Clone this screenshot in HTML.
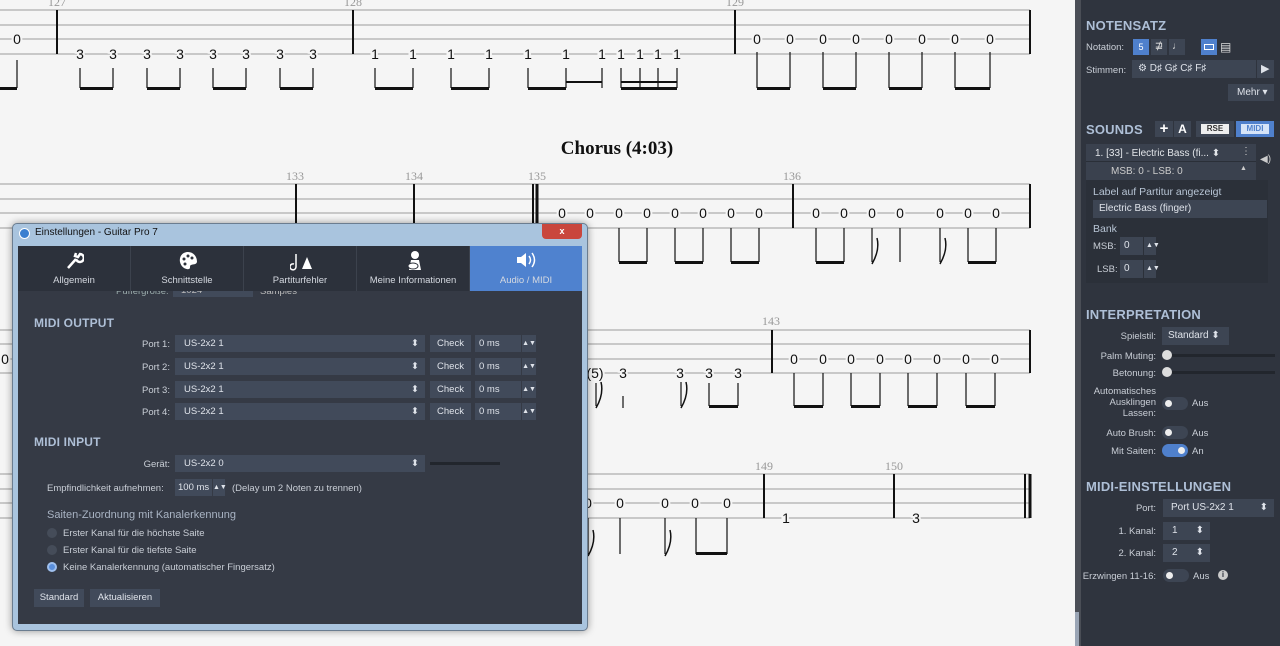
<!DOCTYPE html>
<html><head><meta charset="utf-8"><style>
*{margin:0;padding:0;box-sizing:border-box}
body{width:1280px;height:646px;overflow:hidden;background:#f5f5f5;font-family:"Liberation Sans",sans-serif;position:relative}
.abs{position:absolute}
#panel{position:absolute;left:1075px;top:0;width:205px;height:646px;background:#2f343e;color:#c9ced6;font-size:10px}
#panel .strip{position:absolute;left:0;top:0;width:6px;height:646px;background:#4a4e56}
.h{position:absolute;font-weight:bold;font-size:13px;color:#aebfd6;letter-spacing:.2px}
.lbl{position:absolute;text-align:right;font-size:9.5px;color:#c9ced6}
.box{position:absolute;background:#3d4553;color:#dfe3ea;font-size:10px;padding-left:6px;line-height:18px}
.tog{position:absolute;width:26px;height:13px;border-radius:7px;background:#3d4553}
.tog:before{content:"";position:absolute;left:3px;top:3px;width:7px;height:7px;border-radius:50%;background:#eee}
.tog.on{background:#4f80cc}.tog.on:before{left:16px}
.slider{position:absolute;height:3px;background:#22262d}
.knob{position:absolute;width:10px;height:10px;border-radius:50%;background:#ddd}
#dlg{position:absolute;left:12px;top:223px;width:576px;height:408px;background:#a9c4de;border:1px solid #6b7d90;border-radius:5px;box-shadow:0 0 8px rgba(0,0,0,.4)}
#dlg .inner{position:absolute;left:5px;top:22px;width:564px;height:378px;background:#353a45;color:#c9ced6;font-size:9.5px}
.tab{position:absolute;top:0;height:45px;width:113px;background:#2c313b;color:#d5d9e0;font-size:9.5px;text-align:center;border-right:1px solid #3c424d}
.tab span{position:absolute;bottom:5px;left:0;right:0}
.sel{position:absolute;background:#414a5a;color:#dfe3ea;height:17px;line-height:17px;padding-left:9px;font-size:9.5px}
.btn{position:absolute;background:#414a5a;color:#dfe3ea;height:17px;line-height:17px;text-align:center;font-size:9.5px}
.radio{position:absolute;width:10px;height:10px;border-radius:50%;background:#454c59}
</style></head><body>
<svg class="abs" style="left:0;top:0" width="1075" height="646" font-family="Liberation Sans,sans-serif" font-size="14">
<g stroke="#9a9a9a" stroke-width="1">
<path d="M0 10H1030M0 25H1030M0 39H1030M0 54H1030"/>
<path d="M0 184H1030M0 199H1030M0 213H1030M0 228H1030"/>
<path d="M0 330H1030M0 344H1030M0 359H1030M0 373H1030"/>
<path d="M0 474H1030M0 489H1030M0 503H1030M0 518H1030"/>
</g>
<g stroke="#111" stroke-width="2">
<path d="M57 10V54M353 10V54M735 10V54M1030 10V54"/>
<path d="M296 184V228M414 184V228M533 184V228M793 184V228M1030 184V228"/>
<path d="M772 330V373M1030 330V373"/>
<path d="M764 474V518M894 474V518M1025 474V518"/>
</g>
<path d="M537 184V228M1030 474V518" stroke="#111" stroke-width="3"/>
<g fill="#999" font-family="Liberation Serif,serif" font-size="12" text-anchor="middle">
<text x="57" y="6">127</text><text x="353" y="6">128</text><text x="735" y="6">129</text>
<text x="295" y="180">133</text><text x="414" y="180">134</text><text x="537" y="180">135</text><text x="792" y="180">136</text>
<text x="771" y="325">143</text><text x="764" y="470">149</text><text x="894" y="470">150</text>
</g>
<text x="617" y="154" font-family="Liberation Serif,serif" font-weight="bold" font-size="19" text-anchor="middle" fill="#111">Chorus (4:03)</text>
<g fill="#111" text-anchor="middle">
<g style="paint-order:stroke" stroke="#f5f5f5" stroke-width="4">
<text x="17" y="44">0</text>
<text x="80" y="59">3</text><text x="113" y="59">3</text><text x="147" y="59">3</text><text x="180" y="59">3</text><text x="213" y="59">3</text><text x="246" y="59">3</text><text x="280" y="59">3</text><text x="313" y="59">3</text>
<text x="375" y="59">1</text><text x="413" y="59">1</text><text x="451" y="59">1</text><text x="489" y="59">1</text><text x="528" y="59">1</text><text x="566" y="59">1</text><text x="602" y="59">1</text><text x="621" y="59">1</text><text x="640" y="59">1</text><text x="658" y="59">1</text><text x="677" y="59">1</text>
<text x="757" y="44">0</text><text x="790" y="44">0</text><text x="823" y="44">0</text><text x="856" y="44">0</text><text x="889" y="44">0</text><text x="922" y="44">0</text><text x="955" y="44">0</text><text x="990" y="44">0</text>
<text x="562" y="218">0</text><text x="590" y="218">0</text><text x="619" y="218">0</text><text x="647" y="218">0</text><text x="675" y="218">0</text><text x="703" y="218">0</text><text x="731" y="218">0</text><text x="759" y="218">0</text>
<text x="816" y="218">0</text><text x="844" y="218">0</text><text x="872" y="218">0</text><text x="900" y="218">0</text><text x="940" y="218">0</text><text x="968" y="218">0</text><text x="996" y="218">0</text>
<text x="794" y="364">0</text><text x="823" y="364">0</text><text x="851" y="364">0</text><text x="880" y="364">0</text><text x="908" y="364">0</text><text x="937" y="364">0</text><text x="966" y="364">0</text><text x="995" y="364">0</text>
<text x="5" y="364">0</text>
<text x="595" y="378">(5)</text><text x="623" y="378">3</text><text x="680" y="378">3</text><text x="709" y="378">3</text><text x="738" y="378">3</text>
<text x="588" y="508">0</text><text x="620" y="508">0</text><text x="665" y="508">0</text><text x="695" y="508">0</text><text x="727" y="508">0</text>
<text x="786" y="523">1</text><text x="916" y="523">3</text>
</g>
</g>
<g stroke="#111" stroke-width="1.2" fill="none">
<path d="M17 60V88M80 68V88M113 68V88M147 68V88M180 68V88M213 68V88M246 68V88M280 68V88M313 68V88M375 68V88M413 68V88M451 68V88M489 68V88M528 68V88M566 68V88M602 68V88M621 68V88M640 68V88M658 68V88M677 68V88M757 52V88M790 52V88M823 52V88M856 52V88M889 52V88M922 52V88M955 52V88M990 52V88"/>
<path d="M619 228V262M647 228V262M675 228V262M703 228V262M731 228V262M759 228V262M816 228V262M844 228V262M872 228V262M900 228V262M968 228V262M996 228V262M940 228V262"/>
<path d="M794 373V406M823 373V406M851 373V406M880 373V406M908 373V406M937 373V406M966 373V406M995 373V406M596 383V406M623 396V408M681 382V406M709 383V406M738 383V406"/>
<path d="M620 518V554M665 518V554M696 518V554M727 518V554M588 518V554"/>
</g>
<g fill="#111">
<rect x="0" y="87" width="17" height="3"/><rect x="80" y="87" width="33" height="3"/><rect x="147" y="87" width="33" height="3"/><rect x="213" y="87" width="33" height="3"/><rect x="280" y="87" width="33" height="3"/>
<rect x="375" y="87" width="38" height="3"/><rect x="451" y="87" width="38" height="3"/><rect x="528" y="87" width="38" height="3"/><rect x="566" y="81" width="36" height="2"/><rect x="621" y="87" width="56" height="3"/><rect x="621" y="81" width="56" height="2"/>
<rect x="757" y="87" width="33" height="3"/><rect x="823" y="87" width="33" height="3"/><rect x="889" y="87" width="33" height="3"/><rect x="955" y="87" width="35" height="3"/>
<rect x="619" y="261" width="28" height="3"/><rect x="675" y="261" width="28" height="3"/><rect x="731" y="261" width="28" height="3"/><rect x="816" y="261" width="28" height="3"/><rect x="968" y="261" width="28" height="3"/>
<rect x="794" y="405" width="29" height="3"/><rect x="851" y="405" width="29" height="3"/><rect x="908" y="405" width="29" height="3"/><rect x="966" y="405" width="29" height="3"/><rect x="709" y="405" width="29" height="3"/>
<rect x="696" y="552" width="31" height="3"/>
</g>
<g stroke="#111" stroke-width="1.5" fill="none"><path d="M872 264Q880 250 877 238M940 264Q948 250 945 238M596 408Q604 394 601 382M681 408Q689 394 686 382M665 556Q673 542 670 530M588 556Q596 542 593 530"/></g>
</svg>

<div id="dlg">
<div class="abs" style="left:6px;top:4px;width:11px;height:11px;border-radius:50%;background:#3a7fd0;border:1px solid #fff"></div>
<div class="abs" style="left:22px;top:3px;font-size:10px;color:#111">Einstellungen - Guitar Pro 7</div>
<div class="abs" style="left:529px;top:0;width:40px;height:15px;background:#c9463d;border-radius:0 0 4px 4px;color:#fff;font-size:9px;text-align:center;line-height:15px;font-weight:bold">x</div>
<div class="inner">
<div class="tab" style="left:0"><svg class="abs" style="left:46px;top:5px" width="20" height="20"><path d="M4 17L12 8M12 8a4 4 0 1 0 4-5l-2 3-3-1 1-3" stroke="#fff" stroke-width="2.5" fill="none"/></svg><span>Allgemein</span></div>
<div class="tab" style="left:113px"><svg class="abs" style="left:47px;top:5px" width="20" height="20"><path d="M10 1C4 1 1 6 2 11s6 8 9 7c2-1 0-3 2-4s5 0 6-3C19 5 15 1 10 1z" fill="#fff"/><circle cx="6" cy="8" r="1.5" fill="#2c313b"/><circle cx="10" cy="5" r="1.5" fill="#2c313b"/><circle cx="14" cy="7" r="1.5" fill="#2c313b"/><circle cx="7" cy="13" r="1.5" fill="#2c313b"/></svg><span>Schnittstelle</span></div>
<div class="tab" style="left:226px"><svg class="abs" style="left:46px;top:5px" width="22" height="20"><path d="M12 18L17 6 22 18z" fill="#fff"/><path d="M6 3v13a3 3 0 1 1-2-3" stroke="#fff" stroke-width="1.5" fill="none"/></svg><span>Partiturfehler</span></div>
<div class="tab" style="left:339px"><svg class="abs" style="left:47px;top:4px" width="22" height="22"><circle cx="11" cy="5" r="4" fill="#fff"/><path d="M5 20l2-10h8l2 10z" fill="#fff"/><ellipse cx="9" cy="16" rx="5" ry="3" fill="#fff" stroke="#2c313b"/></svg><span>Meine Informationen</span></div>
<div class="tab" style="left:452px;width:112px;background:#4f82cf;border:none"><svg class="abs" style="left:45px;top:5px" width="22" height="18"><path d="M2 6h4l5-4v14l-5-4H2z" fill="#fff"/><path d="M14 5q3 4 0 8M17 2q5 7 0 14" stroke="#fff" stroke-width="1.5" fill="none"/></svg><span>Audio / MIDI</span></div>
<div class="abs" style="left:0;top:45px;width:564px;height:10px;overflow:hidden">
<div class="abs" style="left:98px;top:-5px;color:#9aa">Puffergröße:</div>
<div class="abs" style="left:155px;top:-6px;width:80px;height:12px;background:#414a5a;color:#bbb;padding-left:8px">1024</div>
<div class="abs" style="left:242px;top:-5px;color:#bbb">Samples</div></div>
<div class="h" style="left:16px;top:70px;font-size:12px">MIDI OUTPUT</div>
<div class="lbl" style="left:90px;width:62px;top:93px">Port 1:</div><div class="sel" style="left:157px;top:89px;width:250px">US-2x2 1<span style="position:absolute;right:6px">⬍</span></div><div class="btn" style="left:412px;top:89px;width:41px">Check</div><div class="sel" style="left:457px;top:89px;width:46px;padding-left:4px">0 ms</div><div class="btn" style="left:504px;top:89px;width:14px;font-size:7px">▲▼</div>
<div class="lbl" style="left:90px;width:62px;top:116px">Port 2:</div><div class="sel" style="left:157px;top:112px;width:250px">US-2x2 1<span style="position:absolute;right:6px">⬍</span></div><div class="btn" style="left:412px;top:112px;width:41px">Check</div><div class="sel" style="left:457px;top:112px;width:46px;padding-left:4px">0 ms</div><div class="btn" style="left:504px;top:112px;width:14px;font-size:7px">▲▼</div>
<div class="lbl" style="left:90px;width:62px;top:139px">Port 3:</div><div class="sel" style="left:157px;top:135px;width:250px">US-2x2 1<span style="position:absolute;right:6px">⬍</span></div><div class="btn" style="left:412px;top:135px;width:41px">Check</div><div class="sel" style="left:457px;top:135px;width:46px;padding-left:4px">0 ms</div><div class="btn" style="left:504px;top:135px;width:14px;font-size:7px">▲▼</div>
<div class="lbl" style="left:90px;width:62px;top:161px">Port 4:</div><div class="sel" style="left:157px;top:157px;width:250px">US-2x2 1<span style="position:absolute;right:6px">⬍</span></div><div class="btn" style="left:412px;top:157px;width:41px">Check</div><div class="sel" style="left:457px;top:157px;width:46px;padding-left:4px">0 ms</div><div class="btn" style="left:504px;top:157px;width:14px;font-size:7px">▲▼</div>
<div class="h" style="left:16px;top:189px;font-size:12px">MIDI INPUT</div>
<div class="lbl" style="left:90px;width:62px;top:213px">Gerät:</div><div class="sel" style="left:157px;top:209px;width:250px">US-2x2 0<span style="position:absolute;right:6px">⬍</span></div>
<div class="abs" style="left:412px;top:216px;width:70px;height:3px;background:#22262d"></div>
<div class="abs" style="left:29px;top:237px">Empfindlichkeit aufnehmen:</div>
<div class="sel" style="left:157px;top:233px;width:37px;padding-left:3px">100 ms</div><div class="btn" style="left:195px;top:233px;width:12px;font-size:7px">▲▼</div>
<div class="abs" style="left:214px;top:237px">(Delay um 2 Noten zu trennen)</div>
<div class="abs" style="left:29px;top:263px;font-size:11px;color:#a9b4c4">Saiten-Zuordnung mit Kanalerkennung</div>
<div class="radio" style="left:29px;top:282px"></div><div class="abs" style="left:45px;top:282px">Erster Kanal für die höchste Saite</div>
<div class="radio" style="left:29px;top:299px"></div><div class="abs" style="left:45px;top:299px">Erster Kanal für die tiefste Saite</div>
<div class="radio" style="left:29px;top:316px;background:#5a8fdc;border:2px solid #9fc0ee"></div><div class="abs" style="left:45px;top:316px">Keine Kanalerkennung (automatischer Fingersatz)</div>
<div class="btn" style="left:16px;top:343px;width:50px;height:18px">Standard</div>
<div class="btn" style="left:72px;top:343px;width:70px;height:18px">Aktualisieren</div>
</div></div>

<div id="panel"><div class="strip"></div>
<div class="h" style="left:11px;top:18px">NOTENSATZ</div>
<div class="lbl" style="left:11px;top:42px;text-align:left">Notation:</div>
<div class="abs" style="left:58px;top:39px;width:16px;height:16px;background:#4f80cc;color:#fff;text-align:center;font-size:9px;line-height:16px">5</div>
<div class="abs" style="left:76px;top:39px;width:16px;height:16px;background:#3d4553;color:#ddd;text-align:center;line-height:16px">⋣</div>
<div class="abs" style="left:94px;top:39px;width:16px;height:16px;background:#3d4553;color:#ddd;text-align:center;line-height:16px">♩</div>
<div class="abs" style="left:126px;top:39px;width:16px;height:16px;background:#4f80cc"><div style="margin:5px 3px;height:6px;border:1px solid #fff"></div></div>
<div class="abs" style="left:145px;top:39px;width:16px;height:16px;color:#ddd;font-size:12px;line-height:16px">▤</div>
<div class="lbl" style="left:11px;top:65px;text-align:left">Stimmen:</div>
<div class="box" style="left:57px;top:60px;width:124px">⚙ D♯ G♯ C♯ F♯</div>
<div class="box" style="left:182px;top:60px;width:17px;padding-left:4px;font-size:11px">▶</div>
<div class="box" style="left:153px;top:84px;width:46px;height:17px;line-height:17px;padding-left:9px">Mehr ▾</div>
<div class="h" style="left:11px;top:122px">SOUNDS</div>
<div class="abs" style="left:80px;top:121px;width:18px;height:16px;background:#3d4553;color:#fff;font-weight:bold;text-align:center;font-size:15px;line-height:15px">+</div>
<div class="abs" style="left:99px;top:121px;width:17px;height:16px;background:#3d4553;color:#fff;font-weight:bold;text-align:center;font-size:12px;line-height:16px">A</div>
<div class="abs" style="left:121px;top:121px;width:38px;height:16px;background:#3d4553;padding:3px 5px"><div style="background:#eee;color:#333;font-size:8px;font-weight:bold;text-align:center;line-height:10px">RSE</div></div>
<div class="abs" style="left:161px;top:121px;width:38px;height:16px;background:#4f80cc;padding:3px 5px"><div style="background:#d6e4f8;color:#4f80cc;font-size:8px;font-weight:bold;text-align:center;line-height:10px">MIDI</div></div>
<div class="abs" style="left:11px;top:144px;width:170px;height:36px;background:#3a414e"></div>
<div class="abs" style="left:11px;top:161px;width:170px;height:1px;background:#2a2f38"></div>
<div class="abs" style="left:20px;top:148px;font-size:10px;color:#e3e6ea">1. [33] - Electric Bass (fi... ⬍</div>
<div class="abs" style="left:166px;top:146px;color:#ccc">⋮</div>
<div class="abs" style="left:36px;top:166px;color:#ccc">MSB: 0 - LSB: 0</div>
<div class="abs" style="left:165px;top:165px;color:#ccc;font-size:7px">▲</div>
<div class="abs" style="left:185px;top:154px;color:#ccc">◀)</div>
<div class="abs" style="left:11px;top:180px;width:182px;height:103px;background:#2b3039"></div>
<div class="abs" style="left:18px;top:186px;font-size:10.5px;color:#b7c4d4">Label auf Partitur angezeigt</div>
<div class="box" style="left:18px;top:200px;width:174px">Electric Bass (finger)</div>
<div class="abs" style="left:18px;top:223px;font-size:10.5px;color:#b7c4d4">Bank</div>
<div class="lbl" style="left:18px;top:241px;text-align:left">MSB:</div><div class="box" style="left:45px;top:237px;width:23px;padding-left:4px">0</div><div class="box" style="left:69px;top:237px;width:12px;padding-left:2px;font-size:7px">▲▼</div>
<div class="lbl" style="left:22px;top:264px;text-align:left">LSB:</div><div class="box" style="left:45px;top:260px;width:23px;padding-left:4px">0</div><div class="box" style="left:69px;top:260px;width:12px;padding-left:2px;font-size:7px">▲▼</div>
<div class="h" style="left:11px;top:307px">INTERPRETATION</div>
<div class="lbl" style="left:0;width:81px;top:331px">Spielstil:</div><div class="box" style="left:87px;top:327px;width:67px">Standard ⬍</div>
<div class="lbl" style="left:0;width:81px;top:351px">Palm Muting:</div><div class="slider" style="left:90px;top:354px;width:110px"></div><div class="knob" style="left:87px;top:350px"></div>
<div class="lbl" style="left:0;width:81px;top:368px">Betonung:</div><div class="slider" style="left:90px;top:371px;width:110px"></div><div class="knob" style="left:87px;top:367px"></div>
<div class="lbl" style="left:0;width:81px;top:386px;line-height:11px">Automatisches<br>Ausklingen<br>Lassen:</div><div class="tog" style="left:87px;top:397px"></div><div class="lbl" style="left:117px;top:398px">Aus</div>
<div class="lbl" style="left:0;width:81px;top:428px">Auto Brush:</div><div class="tog" style="left:87px;top:426px"></div><div class="lbl" style="left:117px;top:428px">Aus</div>
<div class="lbl" style="left:0;width:81px;top:446px">Mit Saiten:</div><div class="tog on" style="left:87px;top:444px"></div><div class="lbl" style="left:117px;top:446px">An</div>
<div class="h" style="left:11px;top:479px">MIDI-EINSTELLUNGEN</div>
<div class="lbl" style="left:0;width:81px;top:503px">Port:</div><div class="box" style="left:88px;top:499px;width:111px;padding-left:8px">Port US-2x2 1<span style="position:absolute;right:6px">⬍</span></div>
<div class="lbl" style="left:0;width:81px;top:526px">1. Kanal:</div><div class="box" style="left:88px;top:522px;width:47px;padding-left:9px">1<span style="position:absolute;right:6px">⬍</span></div>
<div class="lbl" style="left:0;width:81px;top:548px">2. Kanal:</div><div class="box" style="left:88px;top:544px;width:47px;padding-left:9px">2<span style="position:absolute;right:6px">⬍</span></div>
<div class="lbl" style="left:0;width:81px;top:571px">Erzwingen 11-16:</div><div class="tog" style="left:88px;top:569px"></div><div class="lbl" style="left:118px;top:571px">Aus</div>
<div class="abs" style="left:143px;top:570px;width:10px;height:10px;border-radius:50%;background:#ccc;color:#2f343e;font-size:8px;text-align:center;line-height:10px;font-weight:bold">i</div>
<div class="abs" style="left:0;top:612px;width:4px;height:34px;background:#9aa5b5"></div>
</div>
</body></html>
